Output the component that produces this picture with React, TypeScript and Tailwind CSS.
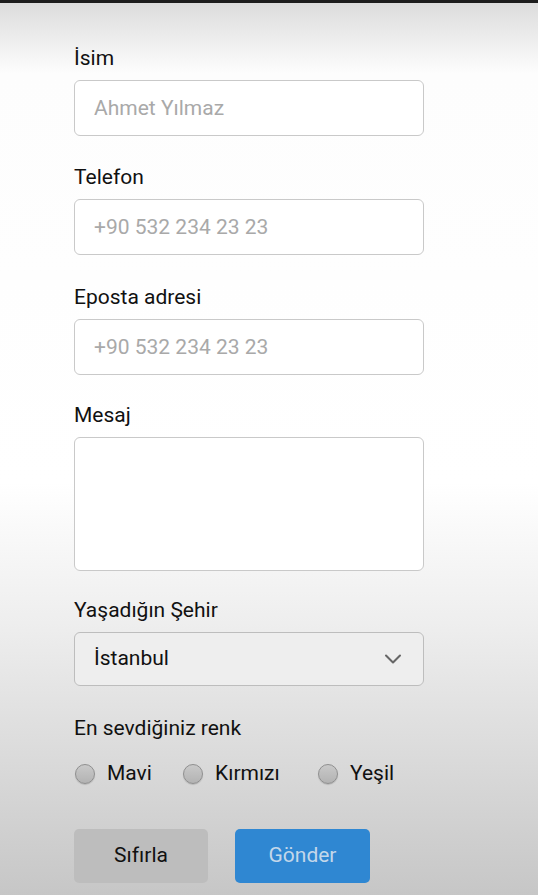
import { ChevronDown } from 'lucide-react';

const font = { fontFamily: 'Roboto, "Noto Sans", sans-serif' };

function Field({ label, children }: { label: string; children: React.ReactNode }) {
  return (
    <div className="flex flex-col">
      <label className="text-[21px] leading-6 text-[#111] mb-[10px]">{label}</label>
      {children}
    </div>
  );
}

function Radio({ label }: { label: string }) {
  return (
    <label className="flex items-center gap-3">
      <span className="h-5 w-5 rounded-full border border-[#8f8f8f] bg-gradient-to-b from-[#c9c9c9] to-[#b3b3b3] shadow-[0_1px_1px_rgba(0,0,0,0.15)]" />
      <span className="text-[21px] text-[#111]">{label}</span>
    </label>
  );
}

export default function App() {
  return (
    <div
      style={font}
      className="min-h-[895px] w-full border-t-[3px] border-[#1c1c1c] bg-[linear-gradient(to_bottom,#dcdcdc_0px,#fdfdfd_70px,#ffffff_480px,#eeeeee_620px,#c6c6c6_895px)]"
    >
      <form className="flex flex-col w-[350px] ml-[74px] pt-[43px]">
        <Field label="İsim">
          <input
            placeholder="Ahmet Yılmaz"
            className="h-[56px] rounded-[6px] border border-[#c9c9c9] bg-white px-[19px] text-[21px] placeholder:text-[#a9a9a9] outline-none"
          />
        </Field>
        <div className="h-[29px]" />
        <Field label="Telefon">
          <input
            placeholder="+90 532 234 23 23"
            className="h-[56px] rounded-[6px] border border-[#c9c9c9] bg-white px-[19px] text-[21px] placeholder:text-[#a9a9a9] outline-none"
          />
        </Field>
        <div className="h-[30px]" />
        <Field label="Eposta adresi">
          <input
            placeholder="+90 532 234 23 23"
            className="h-[56px] rounded-[6px] border border-[#c9c9c9] bg-white px-[19px] text-[21px] placeholder:text-[#a9a9a9] outline-none"
          />
        </Field>
        <div className="h-[28px]" />
        <Field label="Mesaj">
          <textarea className="h-[134px] resize-none rounded-[6px] border border-[#c9c9c9] bg-white px-[19px] py-3 text-[21px] outline-none" />
        </Field>
        <div className="h-[27px]" />
        <Field label="Yaşadığın Şehir">
          <div className="relative h-[54px] rounded-[6px] border border-[#bdbdbd] bg-[#eeeeee] flex items-center px-[19px]">
            <span className="text-[21px] text-[#111]">İstanbul</span>
            <ChevronDown className="absolute right-[16px] top-1/2 -translate-y-1/2 h-7 w-7 text-[#666]" strokeWidth={1.75} />
          </div>
        </Field>
        <div className="h-[30px]" />
        <div className="text-[21px] leading-6 text-[#111]">En sevdiğiniz renk</div>
        <div className="flex items-center mt-[18px] ml-[1px]">
          <div className="w-[108px]"><Radio label="Mavi" /></div>
          <div className="w-[135px]"><Radio label="Kırmızı" /></div>
          <Radio label="Yeşil" />
        </div>
        <div className="flex gap-[27px] mt-[39px]">
          <button type="button" className="h-[54px] w-[134px] rounded-[5px] bg-[#bdbdbd] text-[21px] text-[#111]">
            Sıfırla
          </button>
          <button type="button" className="h-[54px] w-[135px] rounded-[5px] bg-[#2f87d2] text-[21px] text-[#c3d7ea]">
            Gönder
          </button>
        </div>
      </form>
    </div>
  );
}
